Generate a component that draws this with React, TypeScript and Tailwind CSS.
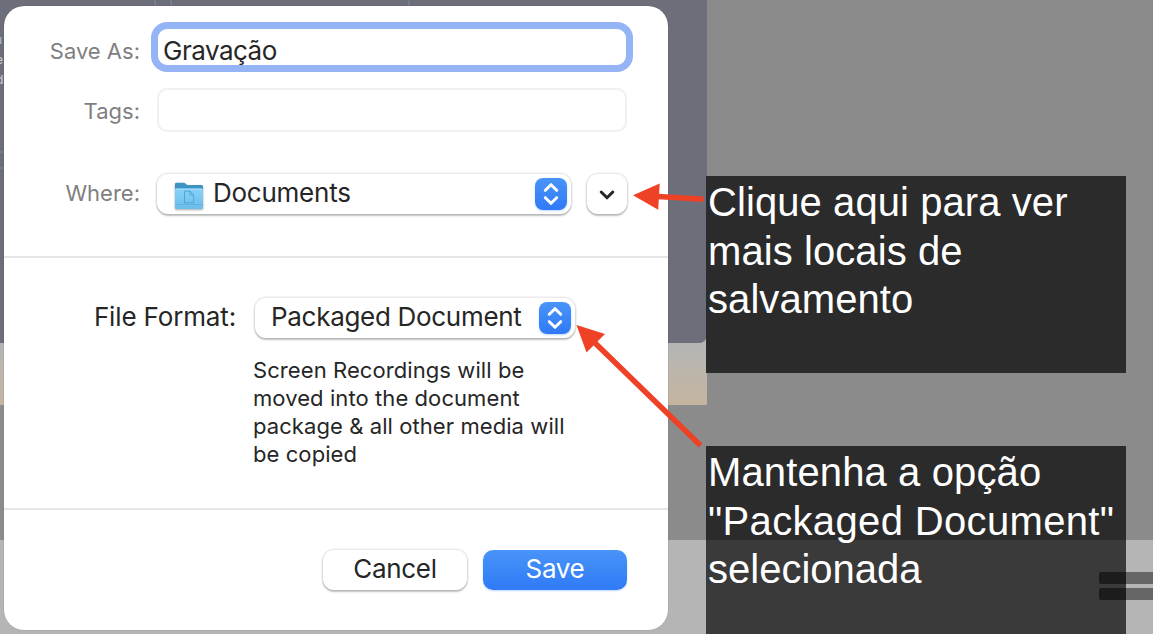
import type { ReactNode } from "react";

const control =
  "flex items-center rounded-[11px] bg-white shadow-[0_0_0_1.5px_rgba(0,0,0,0.08),0_2px_2px_rgba(0,0,0,0.22)]";

function Stepper() {
  return (
    <span className="flex h-8 w-8 shrink-0 items-center justify-center rounded-[8px] bg-linear-to-b from-[#4994f8] to-[#2f7af6] shadow-[0_1px_2px_rgba(47,122,246,0.3)]">
      <svg width="32" height="32" viewBox="0 0 32 32" fill="none" stroke="white" strokeWidth="3" strokeLinecap="round" strokeLinejoin="round">
        <path d="M10.3 12.3 16 6.700l5.700 5.600M10.300 19.700 16 25.300l5.700-5.600" />
      </svg>
    </span>
  );
}

function FolderIcon() {
  return (
    <svg className="mt-1 shrink-0 drop-shadow-[0_1px_1px_rgba(0,0,0,0.35)]" width="30" height="28" viewBox="0 0 30 28">
      <defs>
        <linearGradient id="folder" x1="0" y1="0" x2="0" y2="1">
          <stop offset="0" stopColor="#87d1f8" />
          <stop offset="1" stopColor="#6cbdec" />
        </linearGradient>
      </defs>
      <path d="M1 2Q1 .8 2.400.8h7.200q1.200 0 2.200 1.300Q12.600 3 14 3h13.500Q29 3 29 4.500V10H1z" fill="#3f93c4" />
      <rect x="1" y="6.500" width="28" height="20.500" rx="1.500" fill="url(#folder)" />
      <path d="M1.500 7.200h27" stroke="#a8e0fb" strokeWidth="1" />
      <path d="M1 22.500h28" stroke="#5fb2e0" strokeWidth="1" />
      <path d="M10.500 9h5.500l3.700 4v7.800h-9.200zM16 9v4h3.700" fill="none" stroke="#4fa6d6" strokeWidth="1" />
    </svg>
  );
}

function Row({ label, children, className }: { label: string; children: ReactNode; className: string }) {
  return (
    <div className={`flex items-end ${className}`}>
      <span className="mb-[7px] w-[137px] shrink-0 pr-[1px] text-right text-[22px] leading-7 whitespace-nowrap text-[#7f7f7f]">
        {label}
      </span>
      {children}
    </div>
  );
}

function SaveDialog() {
  return (
    <section className="absolute top-[6px] left-[4px] flex h-[624px] w-[664px] flex-col rounded-[20px] bg-white text-[#262626] shadow-[0_0_1px_rgba(0,0,0,0.4)]">
      <div className="flex h-[250px] shrink-0 flex-col">
        <Row label="Save As:" className="mt-4 h-[50px]">
          <div className="ml-[10px] flex h-[50px] w-[482px] items-center rounded-[16px] border-7 border-[#94b4f5] bg-white pt-2 pl-[5px] text-[26px] leading-8 tracking-[-0.5px] whitespace-nowrap">
            Gravação
          </div>
        </Row>
        <Row label="Tags:" className="mt-4 h-11">
          <div className="ml-4 h-11 w-[470px] rounded-[10px] border-2 border-[#f0f0f0]" />
        </Row>
        <Row label="Where:" className="mt-[42px] h-10">
          <div className={`${control} ml-4 h-10 w-[414px] pr-1 pl-[17px]`}>
            <FolderIcon />
            <span className="mb-[2px] ml-[9px] flex-1 text-[26px] leading-8 tracking-[-0.25px] whitespace-nowrap">Documents</span>
            <Stepper />
          </div>
          <button className={`${control} ml-4 h-10 w-10 justify-center`}>
            <svg width="20" height="20" viewBox="0 0 20 20" fill="none" stroke="#262626" strokeWidth="3" strokeLinecap="round" strokeLinejoin="round">
              <path d="m4.200 8 5.800 5.800L15.800 8" />
            </svg>
          </button>
        </Row>
      </div>
      <div className="flex h-[254px] shrink-0 flex-col border-y-2 border-[#e6e6e6]">
        <div className="mt-10 flex h-10 items-center">
          <span className="mb-[2px] w-[233px] pr-[1px] text-right text-[26px] leading-8 tracking-[-0.15px] whitespace-nowrap">File Format:</span>
          <div className={`${control} ml-[18px] h-10 w-[320px] pr-1 pl-4`}>
            <span className="mb-[2px] flex-1 text-[26px] leading-8 tracking-[-0.3px] whitespace-nowrap">Packaged Document</span>
            <Stepper />
          </div>
        </div>
        <p className="mt-[18px] ml-[249px] text-[22px] leading-7 tracking-[0.08px] whitespace-nowrap">
          Screen Recordings will be
          <br />
          moved into the document
          <br />
          package &amp; all other media will
          <br />
          be copied
        </p>
      </div>
      <div className="flex gap-4 pt-10 pl-[319px] text-[26px] leading-8 tracking-[-0.3px]">
        <button className={`${control} h-10 w-[144px] justify-center pb-[2px]`}>Cancel</button>
        <button className="flex h-10 w-[144px] items-center justify-center rounded-[10px] bg-linear-to-b from-[#4994f8] to-[#2f7af6] pb-[2px] text-white shadow-[0_1px_2px_rgba(47,122,246,0.3)]">
          Save
        </button>
      </div>
    </section>
  );
}

function Desktop() {
  return (
    <>
      <div className="absolute top-0 left-0 h-[405px] w-[707px] bg-linear-to-b from-[#b5b5b5] from-85% to-[#c4b59f]" />
      <div className="absolute top-0 left-0 h-[343px] w-[707px] overflow-hidden rounded-br-[8px] bg-[#6c6e7a]">
        <div className="absolute top-0 left-[154px] h-6 w-[18px] border-x-2 border-[#737a91]" />
        <div className="absolute top-0 left-[408px] h-6 w-[2px] bg-[#737a91]" />
        <div className="absolute top-[151px] left-0 h-[18px] w-4 border-y-2 border-[#737a91]" />
        <span className="absolute top-[32px] left-[-5px] text-[12px] leading-4 text-[#a9c0ee]">u</span>
        <span className="absolute top-[52px] left-[-4px] text-[12px] leading-4 text-[#d0d0d0]">e</span>
        <span className="absolute top-[72px] left-[-4px] text-[12px] leading-4 text-[#d0d0d0]">d</span>
      </div>
      <div className="absolute top-[540px] left-0 h-[94px] w-full bg-[#b5b5b5]" />
      <div className="absolute top-[572px] left-[1099px] flex w-[60px] flex-col gap-1">
        <div className="h-3 rounded-[2px] bg-[#666]" />
        <div className="h-3 rounded-[2px] bg-[#666]" />
      </div>
    </>
  );
}

export default function App() {
  return (
    <main className="relative h-[634px] w-[1153px] overflow-hidden bg-[#8b8b8b] font-['Inter',sans-serif]">
      <Desktop />
      <SaveDialog />
      <aside className="absolute top-[176px] left-[706px] h-[197px] w-[420px] bg-[#2b2b2b] pt-[2px] pl-[2px] font-['Liberation_Sans',sans-serif] text-[40px] leading-[48.7px] tracking-[0.08px] whitespace-nowrap text-white">
        Clique aqui para ver
        <br />
        mais locais de
        <br />
        salvamento
      </aside>
      <aside className="absolute top-[446px] left-[706px] h-[188px] w-[420px] bg-linear-to-b from-[#2b2b2b] from-50% to-[#3a3a3a] to-50% pt-[2px] pl-[2px] font-['Liberation_Sans',sans-serif] text-[40px] leading-[48.7px] whitespace-nowrap text-white">
        <div className="absolute top-[126px] right-0 flex w-[27px] flex-col gap-1">
          <div className="h-3 rounded-l-[2px] bg-[#1c1c1c]" />
          <div className="h-3 rounded-l-[2px] bg-[#1c1c1c]" />
        </div>
        <span className="relative">
          <span className="tracking-[0.12px]">Mantenha a opção</span>
          <br />
          <span className="tracking-[0.35px]">"Packaged Document"</span>
          <br />
          selecionada
        </span>
      </aside>
      <svg className="absolute inset-0" width="1153" height="634" viewBox="0 0 1153 634" fill="#ee4125" stroke="#ee4125">
        <path d="m658 196.500 45.500 2.700" strokeWidth="5.500" />
        <path d="m633 195.200 26.700-11.800-1.500 26.300z" stroke="none" />
        <path d="m594 342 106.500 103.500" strokeWidth="5.500" />
        <path d="m576.500 325 28.500 9-18.500 18.500z" stroke="none" />
      </svg>
    </main>
  );
}
